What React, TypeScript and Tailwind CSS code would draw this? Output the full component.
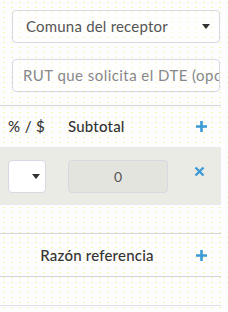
import React from "react";

const Plus = () => (
  <svg width="13" height="13" viewBox="0 0 13 13">
    <path d="M6.5 1v11M1 6.5h11" stroke="#3d9ad6" strokeWidth="2.6" />
  </svg>
);

const Cross = () => (
  <svg width="11" height="11" viewBox="0 0 11 11">
    <path d="M1.5 1.5l8 8M9.5 1.5l-8 8" stroke="#3d9ad6" strokeWidth="2.4" />
  </svg>
);

const Caret = () => (
  <svg width="8" height="5" viewBox="0 0 8 5">
    <path d="M0 0h8L4 5z" fill="#333" />
  </svg>
);

export default function App() {
  return (
    <div
      className="w-[228px] h-[312px] overflow-hidden bg-[#fdfdff] bg-[radial-gradient(circle,#f8f2b0_0.8px,transparent_1.1px)] bg-[length:8px_5px] text-[#333]"
      style={{ fontFamily: "Lato, 'Open Sans', sans-serif" }}
    >
      <div className="w-[221px]">
        <div className="pt-[10px] pl-3 pr-px flex flex-col gap-4">
          <div className="h-[33px] border border-[#d8d8e2] rounded-[4px] bg-white/40 flex items-center justify-between pl-[13px] pr-[9px]">
            <span className="text-[15px] text-[#555] tracking-[0.2px]">Comuna del receptor</span>
            <Caret />
          </div>
          <div className="h-[33px] border border-[#d8d8e2] rounded-[4px] bg-white/40 flex items-center pl-[10px] overflow-hidden whitespace-nowrap">
            <span className="text-[15px] text-[#888] tracking-[0.45px]">RUT que solicita el DTE (opcional)</span>
          </div>
        </div>
        <div className="mt-[13px] border-t border-[#d4d4dc] h-[42px] flex items-center text-[15px]">
          <span className="pl-2 w-[68px] font-medium tracking-[0.4px]">% / $</span>
          <span className="flex-1 font-medium tracking-[0.2px]">Subtotal</span>
          <span className="w-[27px] flex items-center pl-[1px]"><Plus /></span>
        </div>
        <div className="h-[58px] bg-[#ebebe6] flex items-center">
          <div className="pl-2 w-[68px]">
            <div className="w-[38px] h-[33px] border border-[#d8d8e2] rounded-[4px] bg-white flex items-center justify-end pr-[5px]">
              <Caret />
            </div>
          </div>
          <div className="w-[100px] h-[33px] border border-[#d8d8e2] rounded-[4px] bg-[#e4e4de] flex items-center justify-center text-[14px] text-[#555]">
            0
          </div>
          <div className="flex-1 flex justify-end pr-[16px] -mt-[10px]"><Cross /></div>
        </div>
        <div className="h-[28px]" />
        <div className="border-t border-b border-[#d4d4dc] h-[44px] flex items-center text-[15px]">
          <span className="w-[194px] text-center font-medium tracking-[0.2px]">Razón referencia</span>
          <span className="pl-[1px] flex items-center"><Plus /></span>
        </div>
        <div className="h-[29px] border-b border-[#e0e0f0]" />
      </div>
    </div>
  );
}
